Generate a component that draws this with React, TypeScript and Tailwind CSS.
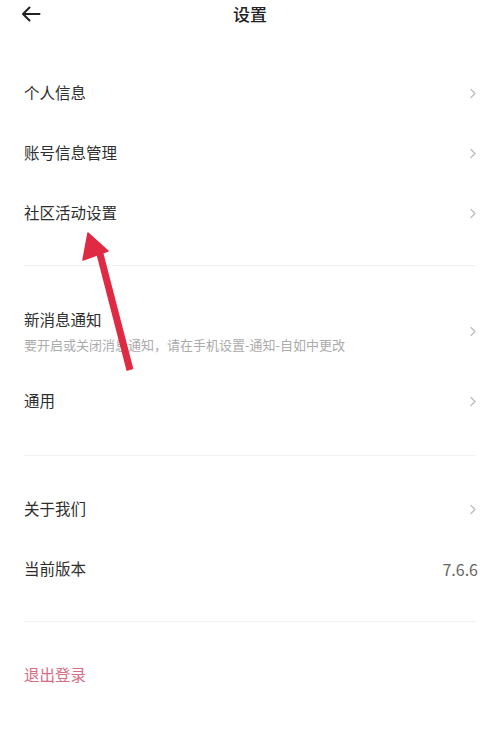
import React from "react";

const font = { fontFamily: '"Noto Sans CJK SC", "Noto Sans", sans-serif' };

function Chevron() {
  return (
    <svg width="8" height="11" viewBox="0 0 8 11" fill="none" className="shrink-0">
      <path d="M2 1.5 L6 5.5 L2 9.5" stroke="#bdbdbd" strokeWidth="1.3" strokeLinecap="round" strokeLinejoin="round" />
    </svg>
  );
}

function Row({ label, right }: { label: string; right?: React.ReactNode }) {
  return (
    <div className="flex h-[60px] items-center justify-between pl-6 pr-[23px]">
      <span className="text-[15.5px] text-[#2e2e2e]">{label}</span>
      {right ?? <Chevron />}
    </div>
  );
}

function Divider() {
  return <div className="mx-6 h-px bg-[#f2f2f2]" />;
}

export default function App() {
  return (
    <div className="relative h-[756px] w-[500px] overflow-hidden bg-white" style={font}>
      {/* Header */}
      <div className="relative flex h-7 items-center justify-center">
        <svg className="absolute left-[21px] top-[6px]" width="20" height="16" viewBox="0 0 20 16" fill="none">
          <path d="M18.5 8 H2.5 M8.5 1.5 L2 8 L8.5 14.5" stroke="#222" strokeWidth="2" strokeLinecap="round" strokeLinejoin="round" />
        </svg>
        <span className="text-[17px] font-medium text-[#222]">设置</span>
      </div>

      {/* Section 1 */}
      <div className="pt-[35px]">
        <Row label="个人信息" />
        <Row label="账号信息管理" />
        <Row label="社区活动设置" />
      </div>
      <div className="pt-[22px]">
        <Divider />
      </div>

      {/* Section 2 */}
      <div className="flex items-center justify-between pl-6 pr-[23px] pt-[42px]">
        <div className="flex flex-col">
          <span className="text-[15.5px] leading-[22px] text-[#2e2e2e]">新消息通知</span>
          <span className="mt-[6px] text-[13px] leading-[18px] text-[#ababab]">
            要开启或关闭消息通知，请在手机设置-通知-自如中更改
          </span>
        </div>
        <Chevron />
      </div>
      <div className="pt-[17px]">
        <Row label="通用" />
      </div>
      <div className="pt-[24px]">
        <Divider />
      </div>

      {/* Section 3 */}
      <div className="pt-[23px]">
        <Row label="关于我们" />
        <Row
          label="当前版本"
          right={<span className="-mr-[1px] text-[16px] text-[#666]">7.6.6</span>}
        />
      </div>
      <div className="pt-[22px]">
        <Divider />
      </div>

      {/* Logout */}
      <div className="mt-[23px] flex h-[60px] items-center pl-6">
        <span className="text-[15.5px] text-[#d96d86]">退出登录</span>
      </div>

      {/* Red annotation arrow */}
      <svg className="absolute left-0 top-0" width="500" height="756" viewBox="0 0 500 756" fill="none">
        <path d="M100 254 L130 370" stroke="#e02a44" strokeWidth="7" strokeLinecap="butt" />
        <path d="M88 233 L83 260 L108 251 Z" fill="#e02a44" stroke="#e02a44" strokeWidth="1.5" strokeLinejoin="round" />
      </svg>
    </div>
  );
}
